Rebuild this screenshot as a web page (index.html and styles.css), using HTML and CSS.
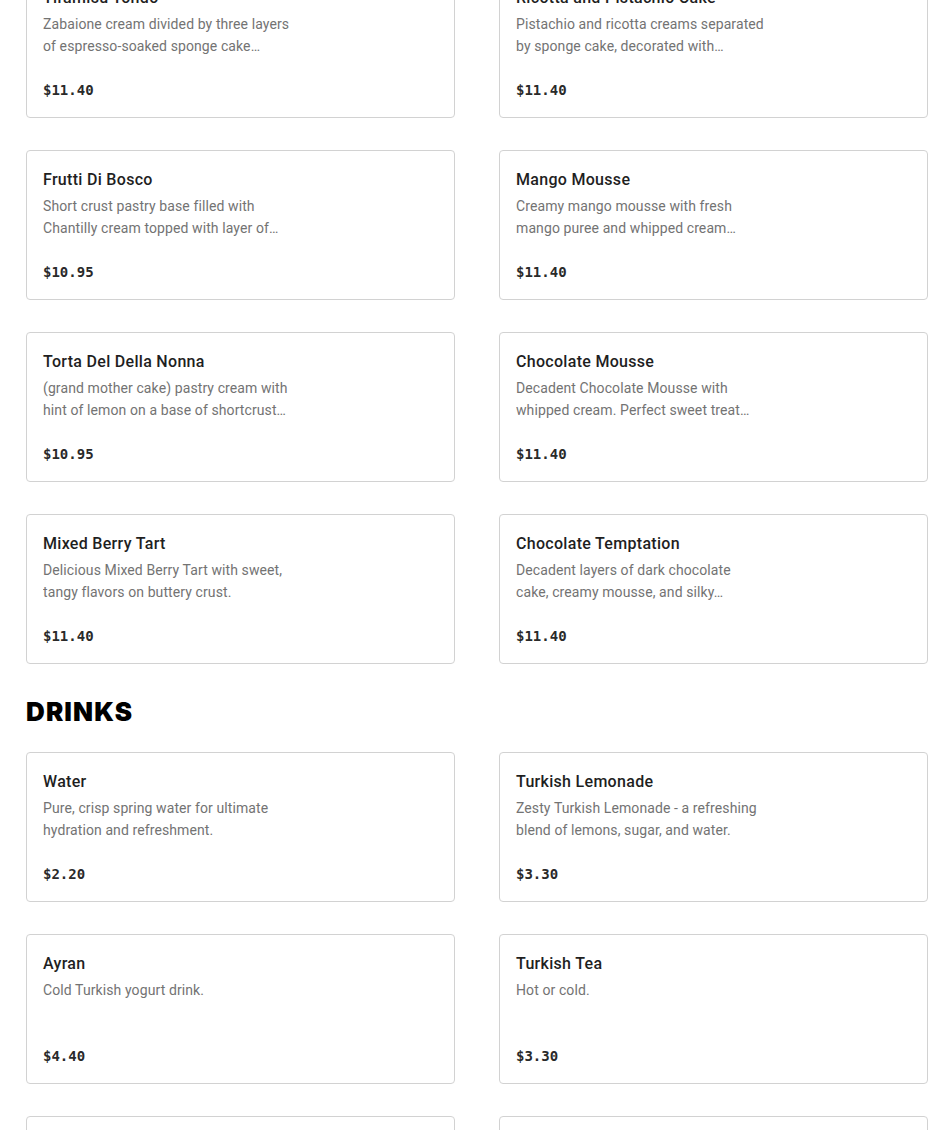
FILE: index.html
```html
<!DOCTYPE html>
<html lang="en">
<head>
<meta charset="utf-8">
<title>Menu</title>
<link rel="stylesheet" href="styles.css">
</head>
<body>
<main class="menu">
  <section class="section">
    <div class="grid">
      <article class="card"><h3 class="name">Tiramisu Tondo</h3><p class="desc">Zabaione cream divided by three layers of espresso-soaked sponge cake…</p><div class="price">$11.40</div></article>
      <article class="card"><h3 class="name">Ricotta and Pistachio Cake</h3><p class="desc">Pistachio and ricotta creams separated by sponge cake, decorated with…</p><div class="price">$11.40</div></article>
      <article class="card"><h3 class="name">Frutti Di Bosco</h3><p class="desc">Short crust pastry base filled with Chantilly cream topped with layer of…</p><div class="price">$10.95</div></article>
      <article class="card"><h3 class="name">Mango Mousse</h3><p class="desc">Creamy mango mousse with fresh mango puree and whipped cream…</p><div class="price">$11.40</div></article>
      <article class="card"><h3 class="name">Torta Del Della Nonna</h3><p class="desc">(grand mother cake) pastry cream with hint of lemon on a base of shortcrust…</p><div class="price">$10.95</div></article>
      <article class="card"><h3 class="name">Chocolate Mousse</h3><p class="desc">Decadent Chocolate Mousse with whipped cream. Perfect sweet treat…</p><div class="price">$11.40</div></article>
      <article class="card"><h3 class="name">Mixed Berry Tart</h3><p class="desc">Delicious Mixed Berry Tart with sweet, tangy flavors on buttery crust.</p><div class="price">$11.40</div></article>
      <article class="card"><h3 class="name">Chocolate Temptation</h3><p class="desc">Decadent layers of dark chocolate cake, creamy mousse, and silky…</p><div class="price">$11.40</div></article>
    </div>
  </section>
  <section class="section">
    <h2 class="section-title">DRINKS</h2>
    <div class="grid">
      <article class="card"><h3 class="name">Water</h3><p class="desc">Pure, crisp spring water for ultimate hydration and refreshment.</p><div class="price">$2.20</div></article>
      <article class="card"><h3 class="name">Turkish Lemonade</h3><p class="desc">Zesty Turkish Lemonade - a refreshing blend of lemons, sugar, and water.</p><div class="price">$3.30</div></article>
      <article class="card"><h3 class="name">Ayran</h3><p class="desc">Cold Turkish yogurt drink.</p><div class="price">$4.40</div></article>
      <article class="card"><h3 class="name">Turkish Tea</h3><p class="desc">Hot or cold.</p><div class="price">$3.30</div></article>
      <article class="card"><h3 class="name">Coca-Cola</h3><p class="desc">Classic soft drink.</p><div class="price">$2.75</div></article>
      <article class="card"><h3 class="name">Diet Coke</h3><p class="desc">Zero sugar soft drink.</p><div class="price">$2.75</div></article>
    </div>
  </section>
</main>
</body>
</html>
```

FILE: styles.css
```css
* { box-sizing: border-box; }

html, body {
  margin: 0;
  padding: 0;
  background: #ffffff;
  overflow: hidden;
}

body {
  font-family: Roboto, "Liberation Sans", Arial, sans-serif;
  color: #222222;
}

.menu {
  padding: 0 22px 0 26px;
  margin-top: -32px;
}

.section-title {
  font-family: Inter, "Liberation Sans", Arial, sans-serif;
  font-weight: 900;
  font-size: 26px;
  line-height: 34px;
  letter-spacing: 1.1px;
  color: #000000;
  margin: 31px 0 23px 0;
}

.grid {
  display: grid;
  grid-template-columns: 429px 429px;
  column-gap: 44px;
  row-gap: 32px;
}

.card {
  border: 1px solid #d2d2d2;
  border-radius: 4px;
  padding: 17px 16px 15px 16px;
  height: 150px;
  display: flex;
  flex-direction: column;
  background: #ffffff;
}

.name {
  margin: 0;
  font-size: 16px;
  line-height: 23px;
  font-weight: 500;
  letter-spacing: 0.3px;
  color: #1f1f1f;
}

.desc {
  margin: 4px 0 0 0;
  max-width: 250px;
  font-size: 14px;
  line-height: 22px;
  letter-spacing: 0.1px;
  color: #737373;
  height: 44px;
  display: -webkit-box;
  -webkit-line-clamp: 2;
  -webkit-box-orient: vertical;
  overflow: hidden;
}

.price {
  margin-top: auto;
  font-family: "DejaVu Sans Mono", "Liberation Mono", monospace;
  font-weight: 700;
  font-size: 14px;
  line-height: 20px;
  margin-bottom: 2px;
  color: #2a2a2a;
}
```
